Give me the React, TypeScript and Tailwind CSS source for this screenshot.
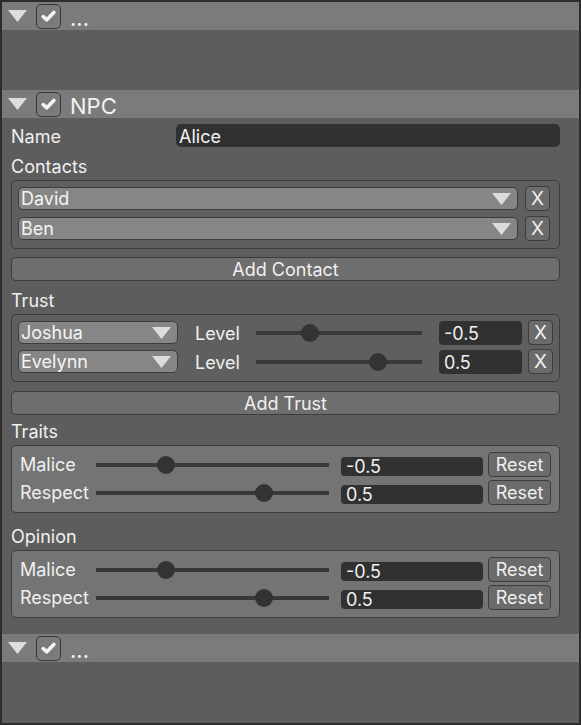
const font = { fontFamily: "Inter, 'Noto Sans', sans-serif" };

function Tri() {
  return (
    <svg width="19" height="12" viewBox="0 0 19 12">
      <polygon points="0,0 19,0 9.5,12" fill="#dcdcdc" />
    </svg>
  );
}

function Header({ title }: { title: string }) {
  return (
    <div className="h-[28px] bg-[#7b7b7b] flex items-center pl-[6px]">
      <Tri />
      <div className="ml-[9px] w-[25px] h-[25px] rounded-[5px] border border-[#363636] bg-[#7b7b7b] flex items-center justify-center">
        <svg width="15" height="12" viewBox="0 0 15 12">
          <path d="M2.2 6.6 L5.8 9.8 L12.8 2.4" stroke="#f4f4f4" strokeWidth="3.6" fill="none" strokeLinecap="round" strokeLinejoin="round" />
        </svg>
      </div>
      <span className="ml-[9px] pt-[3px] text-[22px] text-[#f2f2f2] leading-none">{title}</span>
    </div>
  );
}

function Dropdown({ name, w }: { name: string; w?: string }) {
  return (
    <div className={`${w ?? "flex-1"} h-[23px] rounded-[5px] border border-[#3c3c3c] bg-[#868686] flex items-center justify-between pl-[2px] pr-[6px]`}>
      <span className="text-[18px] text-[#f4f4f4] leading-none pt-[1px]">{name}</span>
      <Tri />
    </div>
  );
}

function XButton() {
  return (
    <div className="w-[25px] h-[25px] rounded-[4px] border border-[#3c3c3c] bg-[#6b6b6b] flex items-center justify-center text-[19px] text-[#f0f0f0] leading-none">
      X
    </div>
  );
}

function Slider({ pos, w }: { pos: number; w: string }) {
  return (
    <div className={`relative ${w} h-[20px] flex items-center`}>
      <div className="w-full h-[4px] bg-[#383838]" />
      <div
        className="absolute top-[1px] w-[18px] h-[18px] rounded-full bg-[#333333]"
        style={{ left: `${pos}px` }}
      />
    </div>
  );
}

function Field({ value, w, h }: { value: string; w: string; h: string }) {
  return (
    <div className={`${w} ${h} rounded-[4px] bg-[#313131] flex items-center pl-[5px] text-[18px] text-[#f0f0f0] leading-none`}>
      <span className="pt-[2px]">{value}</span>
    </div>
  );
}

function Label({ text, pt }: { text: string; pt: string }) {
  return (
    <div className={`${pt} mb-[3px]`}>
      <div className="h-[24px] flex items-center text-[18px] text-[#f0f0f0] pt-[2px]">{text}</div>
    </div>
  );
}

function TrustRow({ name, pos, value }: { name: string; pos: number; value: string }) {
  return (
    <div className="h-[25px] flex items-center">
      <Dropdown name={name} w="w-[160px]" />
      <span className="ml-[17px] w-[61px] text-[18px] text-[#f0f0f0] pt-[1px]">Level</span>
      <Slider pos={pos} w="w-[166px]" />
      <div className="ml-[17px]">
        <Field value={value} w="w-[83px]" h="h-[24px]" />
      </div>
      <div className="ml-[6px]">
        <XButton />
      </div>
    </div>
  );
}

function TraitRow({ name, pos, value }: { name: string; pos: number; value: string }) {
  return (
    <div className="h-[25px] flex items-center">
      <span className="w-[76px] text-[18px] text-[#f0f0f0] leading-none">{name}</span>
      <Slider pos={pos} w="w-[233px]" />
      <div className="ml-[12px] pt-[3px]">
        <Field value={value} w="w-[142px]" h="h-[19px]" />
      </div>
      <div className="ml-[5px] w-[63px] h-[25px] rounded-[4px] border border-[#3c3c3c] bg-[#6b6b6b] flex items-center justify-center text-[18px] text-[#f0f0f0] leading-none">
        Reset
      </div>
    </div>
  );
}

function TraitBox({ rows }: { rows: { name: string; pos: number; value: string }[] }) {
  return (
    <div className="rounded-[5px] border border-[#3c3c3c] bg-[#747474] pt-[6px] pb-[7px] pl-[8px] pr-[6px] flex flex-col gap-[3px]">
      {rows.map((r) => (
        <TraitRow key={r.name} {...r} />
      ))}
    </div>
  );
}

function WideButton({ text, mt }: { text: string; mt: string }) {
  return (
    <div className={`${mt} h-[24px] rounded-[5px] border border-[#3c3c3c] bg-[#6e6e6e] flex items-center justify-center text-[18px] text-[#f0f0f0] leading-none`}>
      <span className="pt-[2px]">{text}</span>
    </div>
  );
}

export default function App() {
  const traits = [
    { name: "Malice", pos: 61, value: "-0.5" },
    { name: "Respect", pos: 159, value: "0.5" },
  ];
  return (
    <div className="w-[581px] h-[725px] bg-[#5d5d5d] border-2 border-[#2c2c2c] overflow-hidden" style={font}>
      <Header title="..." />
      <div className="h-[60px]" />
      <Header title="NPC" />

      <div className="pt-[6px] pl-[9px] pr-[19px]">
        {/* Name */}
        <div className="h-[23px] flex items-center">
          <span className="w-[165px] text-[18px] text-[#f0f0f0] pt-[2px]">Name</span>
          <div className="flex-1 h-[23px] rounded-[5px] bg-[#313131] flex items-center pl-[3px] pt-[2px] text-[18px] text-[#f4f4f4]">
            Alice
          </div>
        </div>

        <Label text="Contacts" pt="pt-[6px]" />
        <div className="rounded-[5px] border border-[#3c3c3c] bg-[#5f5f5f] pt-[5px] pb-[7px] pl-[6px] pr-[9px] flex flex-col gap-[5px]">
          {["David", "Ben"].map((n) => (
            <div key={n} className="h-[25px] flex items-center gap-[7px]">
              <Dropdown name={n} />
              <XButton />
            </div>
          ))}
        </div>
        <WideButton text="Add Contact" mt="mt-[8px]" />

        <Label text="Trust" pt="pt-[6px]" />
        <div className="rounded-[5px] border border-[#3c3c3c] bg-[#5f5f5f] pt-[5px] pb-[7px] pl-[6px] pr-[6px] flex flex-col gap-[4px]">
          <TrustRow name="Joshua" pos={45} value="-0.5" />
          <TrustRow name="Evelynn" pos={113} value="0.5" />
        </div>
        <WideButton text="Add Trust" mt="mt-[9px]" />

        <Label text="Traits" pt="pt-[3px]" />
        <TraitBox rows={traits} />

        <Label text="Opinion" pt="pt-[10px]" />
        <TraitBox rows={traits} />
      </div>

      <div className="mt-[16px]">
        <Header title="..." />
      </div>
    </div>
  );
}
